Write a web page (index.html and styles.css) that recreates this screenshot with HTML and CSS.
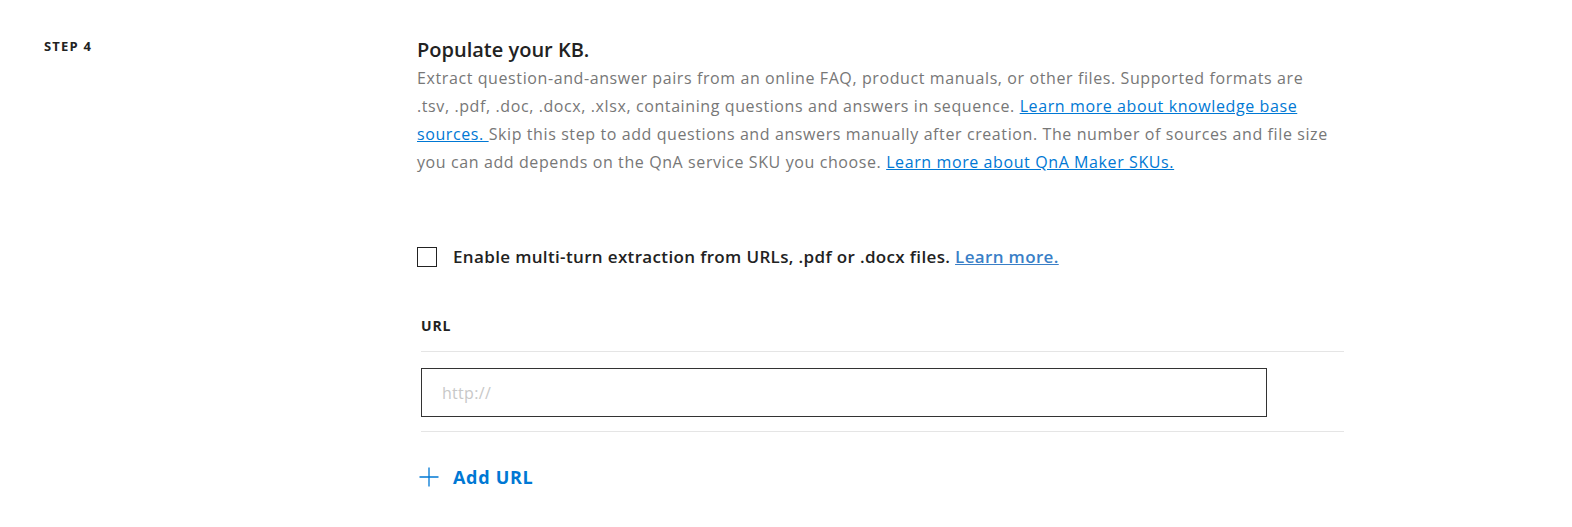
FILE: index.html
```html
<!DOCTYPE html>
<html>
<head>
<meta charset="utf-8">
<link rel="stylesheet" href="styles.css">
</head>
<body>
<div class="step">
  <div class="step-label">STEP 4</div>
  <div class="step-body">
    <h2 class="title">Populate your KB.</h2>
    <p class="desc">Extract question-and-answer pairs from an online FAQ, product manuals, or other files. Supported formats are .tsv, .pdf, .doc, .docx, .xlsx, containing questions and answers in sequence. <a href="#" class="link">Learn more about knowledge base sources. </a>Skip this step to add questions and answers manually after creation. The number of sources and file size you can add depends on the QnA service SKU you choose. <a href="#" class="link">Learn more about QnA Maker SKUs.</a></p>
    <label class="check-row">
      <span class="checkbox"></span>
      <span class="check-text">Enable multi-turn extraction from URLs, .pdf or .docx files. <a href="#" class="link2">Learn more.</a></span>
    </label>
    <div class="url-section">
      <div class="url-label">URL</div>
      <div class="url-row">
        <input class="url-input" type="text" placeholder="http://">
      </div>
      <div class="add-url">
        <svg class="plus" width="20" height="20" viewBox="0 0 20 20"><path d="M10 0.5V19.5M0.5 10H19.5" stroke="#0078d4" stroke-width="1.3" fill="none"/></svg>
        <span>Add URL</span>
      </div>
    </div>
  </div>
</div>
</body>
</html>
```
FILE: styles.css
```css
body {
  margin: 0;
  font-family: "Open Sans", "Noto Sans", sans-serif;
  background: #fff;
  color: #222;
}
.step {
  display: flex;
  padding-top: 36px;
}
.step-label {
  width: 417px;
  box-sizing: border-box;
  padding-left: 44px;
  padding-top: 1px;
  font-size: 13px;
  font-weight: 700;
  letter-spacing: 1.2px;
  color: #222;
}
.step-body {
  width: 927px;
}
.title {
  margin: 0;
  font-size: 20px;
  font-weight: 600;
  line-height: 28px;
  color: #222;
  letter-spacing: 0;
}
.desc {
  margin: 0;
  width: 920px;
  font-size: 16px;
  line-height: 28px;
  color: #777;
  letter-spacing: 0.6px;
}
.link {
  color: #0078d4;
  text-decoration: underline;
}
.check-row {
  display: flex;
  align-items: center;
  margin-top: 69px;
  gap: 16px;
}
.checkbox {
  width: 18px;
  height: 18px;
  border: 1px solid #222;
  flex: none;
}
.check-text {
  font-size: 17px;
  font-weight: 600;
  color: #222;
  letter-spacing: 0.35px;
}
.link2 {
  color: #3a7fc7;
  text-decoration: underline;
}
.url-section {
  padding-left: 4px;
  margin-top: 49px;
}
.url-label {
  font-size: 14px;
  font-weight: 700;
  line-height: 18px;
  letter-spacing: 0.8px;
  padding-bottom: 16px;
  border-bottom: 1px solid #e5e5e5;
  color: #222;
}
.url-row {
  padding: 16px 0 14px;
  border-bottom: 1px solid #e5e5e5;
}
.url-input {
  display: block;
  width: 846px;
  height: 49px;
  box-sizing: border-box;
  border: 1px solid #333;
  padding: 0 20px;
  font-family: "Open Sans", sans-serif;
  font-size: 16px;
  letter-spacing: 0.3px;
  outline: none;
}
.url-input::placeholder {
  color: #c8c8c8;
}
.add-url {
  display: flex;
  align-items: center;
  gap: 14px;
  margin-top: 33px;
  margin-left: -2px;
  color: #0078d4;
  font-size: 18px;
  font-weight: 700;
  letter-spacing: 0.7px;
}
```
